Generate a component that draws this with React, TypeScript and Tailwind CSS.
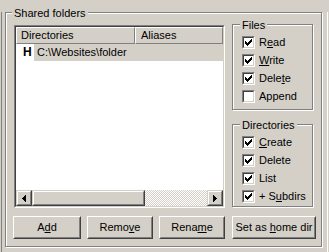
import { ReactNode } from 'react'

const CHECK =
  'M6 0h1v1h-1zM5 1h2v1h-2zM0 2h1v1h-1zM4 2h3v1h-3zM0 3h2v1h-2zM3 3h3v1h-3zM0 4h5v1h-5zM1 5h3v1h-3zM2 6h1v1h-1z'

function GroupBox({
  legend,
  legendClass,
  className,
  children,
}: {
  legend: string
  legendClass: string
  className: string
  children: ReactNode
}) {
  return (
    <div className={`relative border border-[#808080] shadow-[inset_1px_1px_0_#fff,1px_1px_0_#fff] ${className}`}>
      <span className={`absolute -top-[6px] bg-[#d4d0c8] px-[2px] ${legendClass}`}>{legend}</span>
      {children}
    </div>
  )
}

function Checkbox({ checked, children }: { checked: boolean; children: ReactNode }) {
  return (
    <div className="flex h-[13px] items-center gap-[4px]">
      <span className="h-[13px] w-[13px] shrink-0 border border-t-[#808080] border-l-[#808080] border-r-white border-b-white">
        <span className="flex h-full w-full items-center justify-center border border-t-[#404040] border-l-[#404040] border-r-[#d4d0c8] border-b-[#d4d0c8] bg-white">
          {checked ? (
            <svg width="7" height="7" viewBox="0 0 7 7" shapeRendering="crispEdges">
              <path d={CHECK} fill="#000" />
            </svg>
          ) : null}
        </span>
      </span>
      <span className="whitespace-nowrap">{children}</span>
    </div>
  )
}

function Raised({ className, children }: { className: string; children?: ReactNode }) {
  return (
    <div className={`border border-t-[#d4d0c8] border-l-[#d4d0c8] border-r-[#404040] border-b-[#404040] bg-[#d4d0c8] ${className}`}>
      <div className="flex h-full w-full items-center justify-center border border-t-white border-l-white border-r-[#808080] border-b-[#808080]">
        {children}
      </div>
    </div>
  )
}

function Button({ width, children }: { width: string; children: ReactNode }) {
  return (
    <button className={`h-[23px] ${width} border border-t-white border-l-white border-r-[#404040] border-b-[#404040] bg-[#d4d0c8]`}>
      <span className="flex h-full items-center justify-center border border-t-[#d4d0c8] border-l-[#d4d0c8] border-r-[#808080] border-b-[#808080]">
        <span className="whitespace-nowrap">{children}</span>
      </span>
    </button>
  )
}

export default function App() {
  return (
    <div className="h-[252px] w-[329px] overflow-hidden bg-[#d4d0c8] pb-px pl-px pr-px font-['Liberation_Sans',Arial,sans-serif] text-[11px] leading-[13px] text-black">
      <div className="h-full border-b border-l border-r border-b-[#808080] border-l-[#808080] border-r-white">
        <GroupBox
          legend="Shared folders"
          legendClass="left-[6px]"
          className="ml-[3px] mt-[12px] h-[235px] w-[317px] pl-[8px] pt-[11px]"
        >
          <div className="flex items-start">
            {/* list view */}
            <div className="mt-px h-[183px] w-[211px] border border-t-[#808080] border-l-[#808080] border-r-white border-b-white">
              <div className="flex h-full flex-col border border-t-[#404040] border-l-[#404040] border-r-[#d4d0c8] border-b-[#d4d0c8] bg-white">
                <div className="flex h-[17px] bg-[#d4d0c8]">
                  <div className="flex w-[119px] items-center border border-t-white border-l-white border-r-[#808080] border-b-[#808080] pl-[4px]">
                    Directories
                  </div>
                  <div className="flex flex-1 items-center border border-t-white border-l-white border-r-[#808080] border-b-[#808080] pl-[5px]">
                    Aliases
                  </div>
                </div>
                <div className="flex h-[17px]">
                  <div className="flex w-[18px] items-center pl-[7px] text-[12px] font-bold">H</div>
                  <div className="flex flex-1 items-center bg-[#d4d0c8] pl-[3px]">C:\Websites\folder</div>
                </div>
                <div className="flex-1" />
                <div className="flex h-[16px]">
                  <Raised className="w-[16px]">
                    <svg width="4" height="7" viewBox="0 0 4 7" shapeRendering="crispEdges">
                      <path d="M3 0h1v7h-1zM2 1h1v5h-1zM1 2h1v3h-1zM0 3h1v1h-1z" fill="#000" />
                    </svg>
                  </Raised>
                  <Raised className="w-[113px]" />
                  <div className="flex-1 bg-[image:repeating-conic-gradient(#fff_0_25%,#d4d0c8_0_50%)] bg-[length:2px_2px]" />
                  <Raised className="w-[16px]">
                    <svg width="4" height="7" viewBox="0 0 4 7" shapeRendering="crispEdges">
                      <path d="M0 0h1v7h-1zM1 1h1v5h-1zM2 2h1v3h-1zM3 3h1v1h-1z" fill="#000" />
                    </svg>
                  </Raised>
                </div>
              </div>
            </div>

            {/* permissions */}
            <div className="ml-[7px] flex w-[81px] flex-col">
              <GroupBox legend="Files" legendClass="left-[7px]" className="h-[86px] pl-[9px] pt-[11px]">
                <div className="flex flex-col gap-[5px]">
                  <Checkbox checked>
                    R<u>e</u>ad
                  </Checkbox>
                  <Checkbox checked>
                    <u>W</u>rite
                  </Checkbox>
                  <Checkbox checked>
                    Dele<u>t</u>e
                  </Checkbox>
                  <Checkbox checked={false}>Append</Checkbox>
                </div>
              </GroupBox>
              <GroupBox legend="Directories" legendClass="left-[7px]" className="mt-[14px] h-[83px] pl-[9px] pt-[11px]">
                <div className="flex flex-col gap-[5px]">
                  <Checkbox checked>
                    <u>C</u>reate
                  </Checkbox>
                  <Checkbox checked>Delete</Checkbox>
                  <Checkbox checked>List</Checkbox>
                  <Checkbox checked>
                    + S<u>u</u>bdirs
                  </Checkbox>
                </div>
              </GroupBox>
            </div>
          </div>

          <div className="-ml-px mt-[8px] flex">
            <Button width="w-[68px]">
              A<u>d</u>d
            </Button>
            <div className="ml-[6px]">
              <Button width="w-[66px]">
                Remo<u>v</u>e
              </Button>
            </div>
            <div className="ml-[6px]">
              <Button width="w-[66px]">
                Rena<u>m</u>e
              </Button>
            </div>
            <div className="ml-[7px]">
              <Button width="w-[84px]">
                Set as <u>h</u>ome dir
              </Button>
            </div>
          </div>
        </GroupBox>
      </div>
    </div>
  )
}
